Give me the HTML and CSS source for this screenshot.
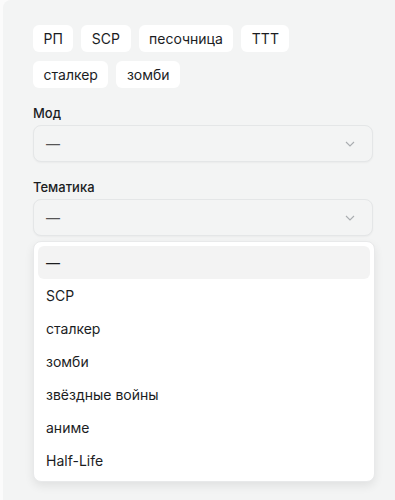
FILE: index.html
```html
<!DOCTYPE html>
<html lang="ru">
<head>
<meta charset="utf-8">
<link rel="stylesheet" href="styles.css">
</head>
<body>
<div class="panel">
  <div class="tags">
    <span class="tag">РП</span>
    <span class="tag">SCP</span>
    <span class="tag">песочница</span>
    <span class="tag">ТТТ</span>
    <span class="tag">сталкер</span>
    <span class="tag">зомби</span>
  </div>
  <div class="field">
    <div class="label">Мод</div>
    <div class="select"><span>—</span>
      <svg class="chev" width="10" height="6" viewBox="0 0 10 6"><path d="M1 1l4 4 4-4" fill="none" stroke="#a9adb0" stroke-width="1.1"/></svg>
    </div>
  </div>
  <div class="field field-next">
    <div class="label">Тематика</div>
    <div class="select-wrap">
      <div class="select"><span>—</span>
        <svg class="chev" width="10" height="6" viewBox="0 0 10 6"><path d="M1 1l4 4 4-4" fill="none" stroke="#a9adb0" stroke-width="1.1"/></svg>
      </div>
      <ul class="menu">
        <li class="item active">—</li>
        <li class="item">SCP</li>
        <li class="item">сталкер</li>
        <li class="item">зомби</li>
        <li class="item">звёздные войны</li>
        <li class="item">аниме</li>
        <li class="item">Half-Life</li>
      </ul>
    </div>
  </div>
</div>
</body>
</html>
```
FILE: styles.css
```css
html, body {
  margin: 0;
  padding: 0;
  background: #fbfbfb;
}
body {
  font-family: Inter, "Noto Sans", sans-serif;
  color: #1b1d1f;
  height: 500px;
  overflow: hidden;
}
.panel {
  margin-left: 3px;
  background: #f3f4f4;
  border-top-left-radius: 8px;
  height: 500px;
  padding: 25px 22px 0 30px;
  box-sizing: border-box;
}
.tags {
  display: flex;
  flex-wrap: wrap;
  gap: 9px 8px;
  width: 280px;
}
.tag {
  background: #fff;
  border-radius: 6px;
  font-size: 14px;
  line-height: 18px;
  padding: 5px 10.5px 4px;
}
.field {
  margin-top: 17px;
}
.field-next {
  margin-top: 17px;
}
.label {
  font-size: 13px;
  font-weight: 500;
  line-height: 16px;
  margin-bottom: 4px;
}
.select-wrap {
  position: relative;
}
.select {
  height: 37px;
  box-sizing: border-box;
  border: 1px solid #e4e6e7;
  border-radius: 8px;
  background: #f3f4f4;
  box-shadow: 0 1px 2px rgba(0,0,0,0.04);
  display: flex;
  align-items: center;
  justify-content: space-between;
  padding: 0 17px 0 12px;
  font-size: 14px;
  color: #555;
}
.chev { display: block; }
.menu {
  position: absolute;
  top: 42px;
  left: 0;
  right: -2px;
  margin: 0;
  padding: 4px;
  list-style: none;
  background: #fff;
  border: 1px solid #e8e9ea;
  border-radius: 8px;
  box-shadow: 0 4px 10px rgba(0,0,0,0.08);
}
.item {
  height: 33px;
  display: flex;
  align-items: center;
  padding: 0 8px;
  font-size: 14px;
  border-radius: 6px;
  color: #1b1d1f;
}
.item.active {
  background: #f3f3f3;
}
```
